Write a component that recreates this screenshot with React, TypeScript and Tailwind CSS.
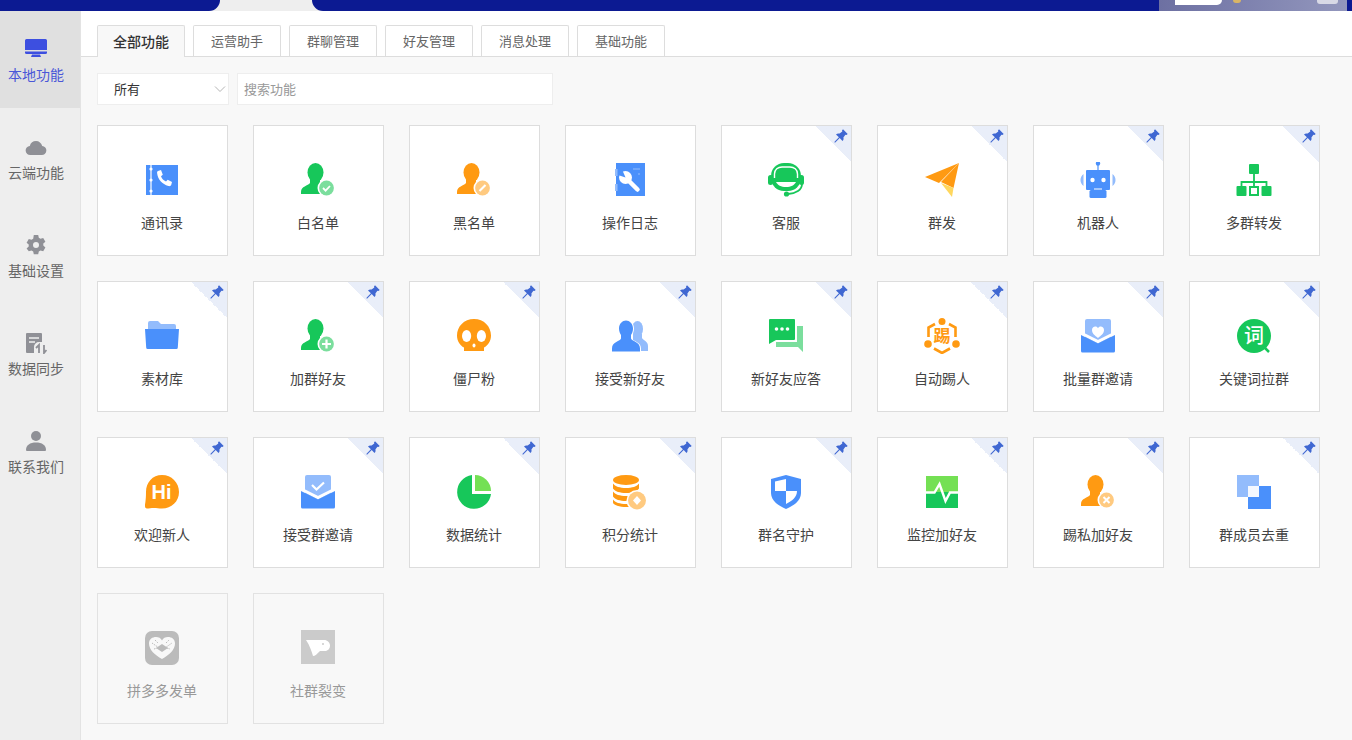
import React from "react";

const B = "#4a90fb", LB = "#93bcfc", G = "#17c75a", LG = "#7bde9d", LM = "#74e054", O = "#ff9a12", LO = "#ffca80";

const person = (c: string) => (
  <>
    <ellipse cx="15.5" cy="10.5" rx="8" ry="9.5" fill={c} />
    <path d="M10 15v6c-2 3-9 3-9 9v2h29v-2c0-6-8-6-10-9v-6z" fill={c} />
  </>
);

const badge = (c: string, inner: React.ReactNode, cx = 26.5, cy = 26) => (
  <>
    <circle cx={cx} cy={cy} r="9" fill="#fff" />
    <circle cx={cx} cy={cy} r="7.4" fill={c} />
    {inner}
  </>
);

const mailBase = (
  <>
    <rect x="5" y="1" width="26" height="26" rx="2" fill={LB} />
  </>
);
const mailFront = (
  <>
    <path d="M1 15l17 8.500L35 15" fill="none" stroke="#fff" strokeWidth="3" />
    <path d="M1 17l17 8.500L35 17v16a1.500 1.500 0 0 1-1.500 1.500h-31A1.500 1.500 0 0 1 1 33z" fill={B} />
  </>
);

const icons: Record<string, React.ReactNode> = {
  book: (
    <>
      <rect x="2" y="3" width="32" height="30" fill={B} />
      <path d="M7 3v30" stroke="#fff" strokeWidth="1.200" />
      <circle cx="7" cy="7" r="1.600" fill="#fff" />
      <circle cx="7" cy="18" r="1.600" fill="#fff" />
      <circle cx="7" cy="29" r="1.600" fill="#fff" />
      <path d="M14 9l3-1 1.800 4.800-1.800 1.400c.9 2.400 2.600 4.200 5 5.300l1.700-1.700 4.300 2.300-.8 3c-.3.900-1.600 1.300-2.800.9-6.200-1.700-10.700-6.800-11.300-13-.1-.9.300-1.800.900-2z" fill="#fff" />
    </>
  ),
  white: (
    <>
      {person(G)}
      {badge(LG, <path d="M23 26l2.600 2.600 4.400-4.600" fill="none" stroke="#fff" strokeWidth="1.800" />)}
    </>
  ),
  black: (
    <>
      {person(O)}
      {badge(LO, <path d="M23.500 29l6-6" fill="none" stroke="#fff" strokeWidth="2.200" />)}
    </>
  ),
  log: (
    <>
      <rect x="4" y="1" width="29" height="33" fill={B} />
      <rect x="3" y="7" width="2.500" height="7" fill={LB} />
      <rect x="3" y="22" width="2.500" height="7" fill={LB} />
      <path d="M21 7h7M26 12h2" stroke={LB} strokeWidth="1.200" />
      <path d="M15 17l10.500 10.500" stroke="#fff" strokeWidth="4.500" strokeLinecap="round" />
      <circle cx="13.500" cy="15.500" r="6.500" fill="#fff" />
      <path d="M13.500 15.500L10 7.500h-4v5.500z" fill={B} />
    </>
  ),
  service: (
    <>
      <rect x="3" y="1" width="30" height="28" rx="13" fill={G} />
      <path d="M6.500 16v-4C6.500 7.500 10 5 14 5h8c4 0 7.500 2.500 7.500 7v4" fill="none" stroke="#fff" strokeWidth="1.400" />
      <path d="M8 20h20c-1.500 3-5 5-10 5s-8.500-2-10-5z" fill="#fff" />
      <rect x="0" y="13" width="5" height="10" rx="2.500" fill={G} />
      <rect x="31" y="13" width="5" height="10" rx="2.500" fill={G} />
      <path d="M34 22c0 6-6 9.500-14 10" fill="none" stroke={G} strokeWidth="1.800" />
      <circle cx="18.500" cy="32" r="2.600" fill={G} />
    </>
  ),
  plane: (
    <>
      <path d="M1 15L35 1 15 21z" fill={O} />
      <path d="M35 1l-5.500 25L17 20z" fill={O} />
      <path d="M17 21l11 14 1.500-9z" fill="#ffd75e" />
    </>
  ),
  robot: (
    <>
      <circle cx="18" cy="1.500" r="2.200" fill={B} />
      <path d="M18 2v6" stroke={B} strokeWidth="1.200" />
      <rect x="6" y="8" width="24" height="20" rx="1" fill={B} />
      <path d="M3.500 12C-.5 15-.5 21 3.500 24zM32.500 12c4 3 4 9 0 12z" fill={LB} />
      <circle cx="12.500" cy="18" r="2.200" fill="#fff" />
      <circle cx="23.500" cy="18" r="2.200" fill="#fff" />
      <path d="M14 27h8" stroke="#fff" strokeWidth="1" />
      <rect x="9.500" y="28" width="17" height="8" rx="1.500" fill={B} />
    </>
  ),
  org: (
    <>
      <rect x="13" y="2" width="10" height="10" rx="1" fill={G} />
      <path d="M18 12v13M5.500 24v-4h25v4" fill="none" stroke={G} strokeWidth="1.800" />
      <rect x="0.500" y="24" width="10" height="10" rx="1" fill={G} />
      <rect x="14" y="25" width="8" height="8" fill="none" stroke={G} strokeWidth="2" />
      <rect x="25.500" y="24" width="10" height="10" rx="1" fill={G} />
    </>
  ),
  folder: (
    <>
      <path d="M4 5a2 2 0 0 1 2-2h8l3 3h13a2 2 0 0 1 2 2v3H4z" fill={LB} />
      <path d="M1 11h34l-1.200 18.500a1.500 1.500 0 0 1-1.500 1.500H3.700a1.500 1.500 0 0 1-1.500-1.500z" fill={B} />
    </>
  ),
  skull: (
    <>
      <path d="M18 1C8 1 1 8.500 1 17.500c0 5.500 3 10 7 12V33h20v-3.500c4-2 7-6.500 7-12C35 8.500 28 1 18 1z" fill={O} />
      <ellipse cx="10.600" cy="18" rx="4.600" ry="6" fill="#fff" />
      <ellipse cx="25.400" cy="18" rx="4.600" ry="6" fill="#fff" />
      <ellipse cx="18" cy="27.500" rx="1.500" ry="2" fill="#fff" />
    </>
  ),
  friends: (
    <>
      <ellipse cx="25.500" cy="11" rx="5.500" ry="8" fill={LB} />
      <path d="M21 16h9v4c1 2.500 6 3 6 8v5H21z" fill={LB} />
      <path d="M14 1.500c4 0 8 3.500 8 9 0 3-1 5-2 6.500v3.500c1.500 3.500 9 3 9 10v3H-.5v-3c0-7 7.500-6.500 9-10V17c-1-1.500-2-3.500-2-6.500 0-5.500 3.500-9 7.500-9z" fill="#fff" />
      <path d="M14 2.500c3.500 0 7 3 7 8 0 3-1 5-2 6.500v3.500c1.500 3.500 9 3 9 10v3H0v-3c0-7 7.500-6.500 9-10V17c-1-1.500-2-3.500-2-6.500 0-5 3.500-8 7-8z" fill={B} />
    </>
  ),
  chat: (
    <>
      <path d="M29 8h6v26l-5-5H8v-5h21z" fill={LG} />
      <path d="M1 2a1 1 0 0 1 1-1h24a1 1 0 0 1 1 1v19a1 1 0 0 1-1 1H8l-7 4z" fill={G} />
      <circle cx="8.500" cy="11" r="1.800" fill="#fff" />
      <circle cx="14" cy="11" r="1.800" fill="#fff" />
      <circle cx="19.500" cy="11" r="1.800" fill="#fff" />
    </>
  ),
  kick: (
    <>
      <circle cx="18" cy="3.500" r="3.500" fill={O} />
      <circle cx="4" cy="26" r="3.800" fill={O} />
      <circle cx="32" cy="26" r="3.800" fill={O} />
      <path d="M11 6L4.500 9.500V19M25 6l6.500 3.500V19M10 30.500L18 35l8-4.500" fill="none" stroke={O} strokeWidth="2.600" />
      <text x="18" y="24" textAnchor="middle" fontSize="17" fontWeight="700" fill={O} fontFamily="'Noto Sans CJK SC', sans-serif">踢</text>
    </>
  ),
  mailHeart: (
    <>
      {mailBase}
      <path d="M18 20c-3-2.500-6-4.500-6-8 0-2 1.500-3.500 3.300-3.500 1.200 0 2.200.7 2.700 1.700.5-1 1.500-1.700 2.700-1.700C22.500 8.500 24 10 24 12c0 3.500-3 5.500-6 8z" fill="#fff" />
      {mailFront}
    </>
  ),
  word: (
    <>
      <path d="M27 28l6 6" stroke={G} strokeWidth="2.500" />
      <circle cx="18" cy="18" r="17" fill={G} />
      <text x="18" y="25" textAnchor="middle" fontSize="20" fontWeight="500" fill="#fff" fontFamily="'Noto Sans CJK SC', sans-serif">词</text>
    </>
  ),
  hi: (
    <>
      <path d="M18 1c9.500 0 17 7.500 17 17s-7.500 16.500-17 16.500c-3 0-5.500-.5-8-.5-3 0-5 .5-7 .5-1.500 0-2-1-2-2.500 0-3 1-5 1-14C2 8.500 8.500 1 18 1z" fill={O} />
      <text x="17.500" y="25" textAnchor="middle" fontSize="20" fontWeight="700" fill="#fff" fontFamily="'Liberation Sans', sans-serif">Hi</text>
    </>
  ),
  mailCheck: (
    <>
      {mailBase}
      <path d="M12 11l4.500 4.500L24 8.500" fill="none" stroke="#fff" strokeWidth="2.200" />
      {mailFront}
    </>
  ),
  pie: (
    <>
      <path d="M16 1A17 17 0 1 0 35 20H16z" fill={G} />
      <path d="M19 1a16 16 0 0 1 16 16H19z" fill={LM} />
    </>
  ),
  coins: (
    <>
      <ellipse cx="14" cy="6" rx="13" ry="5" fill={O} />
      <path d="M1 9.500c2 3 7 4.500 13 4.500s11-1.500 13-4.500v5c-2 3-7 4.500-13 4.500S3 17.500 1 14.500z" fill={O} />
      <path d="M1 17.500c2 3 7 4.500 13 4.500s11-1.500 13-4.500v5c-2 3-7 4.500-13 4.500S3 25.500 1 22.500z" fill={O} />
      <path d="M1 25.500c2 3 7 4.500 13 4.500h3v3h-3C8 33 1 31 1 28.500z" fill={O} />
      <circle cx="25" cy="26.500" r="10.500" fill="#fff" />
      <circle cx="25" cy="26.500" r="9" fill={LO} />
      <path d="M25 22l4 4.500-4 4.500-4-4.500z" fill="#fff" />
    </>
  ),
  shield: (
    <>
      <path d="M18 1l15 4v14c0 8-8 13-15 16C11 32 3 27 3 19V5z" fill={B} />
      <path d="M18 5v12H7V7.500zM18 17h11c0 6-5 10-11 13z" fill="#fff" />
    </>
  ),
  monitor: (
    <>
      <rect x="2" y="2" width="32" height="18" fill={LM} />
      <rect x="2" y="18" width="32" height="16" fill={G} />
      <path d="M2 18.500h8.500l5-8.500 6 17 4.500-8.500h8" fill="none" stroke="#fff" strokeWidth="2.400" />
    </>
  ),
  dup: (
    <>
      <rect x="1" y="1" width="22" height="22" fill={LB} />
      <rect x="12" y="12" width="23" height="23" fill={B} />
      <rect x="12" y="12" width="11" height="11" fill="#f4f8ff" />
    </>
  ),
  kickAdd: (
    <>
      {person(O)}
      {badge(LO, <path d="M23.500 23l6 6M29.500 23l-6 6" fill="none" stroke="#fff" strokeWidth="2" />)}
    </>
  ),
  add: (
    <>
      {person(G)}
      {badge(LG, <path d="M26.500 21.500v9M22 26h9" fill="none" stroke="#fff" strokeWidth="2.200" />)}
    </>
  ),
  pdd: (
    <>
      <rect x="1" y="1" width="34" height="34" rx="7" fill="#bbb" />
      <path d="M18 29C11 25 5 20 5 13.500 5 9 8.500 7 12 7c2.500 0 5 1 6 3.500C19 8 21.500 7 24 7c3.500 0 7 2 7 6.500C31 20 25 25 18 29z" fill="#fff" opacity=".9" />
      <path d="M8 13l10 7 10-7M11 10l3 3M22 13l3-3M10 19l3-1M23 18l3 1" fill="none" stroke="#bbb" strokeWidth="1" strokeDasharray="1.500 1" />
      <path d="M12 18l6-4 6 4-6 4z" fill="#bbb" />
    </>
  ),
  dog: (
    <>
      <rect x="1" y="0" width="34" height="34" fill="#cbcbcb" />
      <path d="M6 10h18c3.500 0 6 2.500 6 5.500S28 21 25 21h-5c-3 3-5 5-7 5-1.500-5-3-10-7-16z" fill="#fff" />
      <circle cx="23" cy="14" r="1" fill="#cbcbcb" />
    </>
  ),
};

const Pin = () => (
  <svg viewBox="0 0 14 14" className="absolute top-[3px] right-[3px] h-[14px] w-[14px]">
    <path d="M9 .3L13.700 5l-1.300 1-1-.3-2 2.700c.4 1.400.1 2.500-.9 3.500L5.700 9.100 1 13.700.3 13 4.900 8.300 2 5.500c1-1 2.200-1.300 3.600-.9l2.700-2-.3-1z" fill="#3f67d2" />
  </svg>
);

type Item = { n: string; i: string; p?: boolean; off?: boolean };
const items: Item[] = [
  { n: "通讯录", i: "book" },
  { n: "白名单", i: "white" },
  { n: "黑名单", i: "black" },
  { n: "操作日志", i: "log" },
  { n: "客服", i: "service", p: true },
  { n: "群发", i: "plane", p: true },
  { n: "机器人", i: "robot", p: true },
  { n: "多群转发", i: "org", p: true },
  { n: "素材库", i: "folder", p: true },
  { n: "加群好友", i: "add", p: true },
  { n: "僵尸粉", i: "skull", p: true },
  { n: "接受新好友", i: "friends", p: true },
  { n: "新好友应答", i: "chat", p: true },
  { n: "自动踢人", i: "kick", p: true },
  { n: "批量群邀请", i: "mailHeart", p: true },
  { n: "关键词拉群", i: "word", p: true },
  { n: "欢迎新人", i: "hi", p: true },
  { n: "接受群邀请", i: "mailCheck", p: true },
  { n: "数据统计", i: "pie", p: true },
  { n: "积分统计", i: "coins", p: true },
  { n: "群名守护", i: "shield", p: true },
  { n: "监控加好友", i: "monitor", p: true },
  { n: "踢私加好友", i: "kickAdd", p: true },
  { n: "群成员去重", i: "dup", p: true },
  { n: "拼多多发单", i: "pdd", off: true },
  { n: "社群裂变", i: "dog", off: true },
];

const tabs = ["运营助手", "群聊管理", "好友管理", "消息处理", "基础功能"];

const side = [
  {
    n: "本地功能",
    on: true,
    d: (
      <>
        <path d="M0 2.500A1.500 1.500 0 0 1 1.500 1h19A1.500 1.500 0 0 1 22 2.500V12H0z" fill="currentColor" />
        <path d="M0 13.500h22v1a1.500 1.500 0 0 1-1.500 1.500h-19A1.500 1.500 0 0 1 0 14.500z" fill="currentColor" />
        <path d="M7 16.500h8l1 2.500H6z" fill="currentColor" />
      </>
    ),
  },
  {
    n: "云端功能",
    d: <path d="M5.500 19A4.500 4.500 0 0 1 4.800 10C5.500 6.800 8 5 11 5c3 0 5.500 2 6.200 5a4.500 4.500 0 0 1-.7 9z" fill="currentColor" />,
  },
  {
    n: "基础设置",
    d: (
      <path
        fillRule="evenodd"
        d="M8.800 1h4.400l.6 2.800 1.700 1 2.700-.9 2.200 3.800-2.100 1.900v2l2.100 1.900-2.200 3.800-2.700-.9-1.700 1-.6 2.800H8.800l-.6-2.800-1.700-1-2.700.9L1.600 14.500l2.100-1.900v-2L1.600 8.700l2.200-3.800 2.700.9 1.700-1zM11 8a3 3 0 1 0 0 6 3 3 0 0 0 0-6z"
        fill="currentColor"
      />
    ),
  },
  {
    n: "数据同步",
    d: (
      <>
        <path d="M1 2a1 1 0 0 1 1-1h14a1 1 0 0 1 1 1v8h-3a5 5 0 0 0-5 5v6H2a1 1 0 0 1-1-1z" fill="currentColor" />
        <path d="M4 6h10M4 10h6" stroke="#eee" strokeWidth="1.500" />
        <path d="M14 21v-8l-3 3M19 13v8l2.500-3" fill="none" stroke="currentColor" strokeWidth="1.800" />
      </>
    ),
  },
  {
    n: "联系我们",
    d: (
      <>
        <circle cx="11" cy="6" r="5" fill="currentColor" />
        <path d="M1 20c0-5 4-7.500 10-7.500S21 15 21 20a1 1 0 0 1-1 1H2a1 1 0 0 1-1-1z" fill="currentColor" />
      </>
    ),
  },
];

export default function App() {
  return (
    <div className="flex h-[740px] w-[1352px] flex-col overflow-hidden bg-[#f8f8f8] font-['Noto_Sans_CJK_SC','Liberation_Sans',sans-serif]">
      <div className="flex h-[11px] shrink-0 bg-[#eeeeee]">
        <div className="w-[220px] rounded-br-[12px] bg-[#0c1a92]" />
        <div className="w-[92px]" />
        <div className="flex flex-1 justify-end rounded-bl-[12px] bg-[#0c1a92] pr-[5px]">
          <div className="relative w-[188px] bg-gradient-to-r from-[#6d70a2] to-[#9397bd]">
            <div className="absolute top-0 left-[16px] h-[5px] w-[47px] rounded-br-[5px] bg-white" />
            <div className="absolute top-0 left-[74px] h-[3px] w-[8px] rounded-b-full bg-[#d9b566]" />
            <div className="absolute top-0 left-[158px] h-[4px] w-[21px] rounded-b-[3px] bg-[#d8d9e6]" />
          </div>
        </div>
      </div>
      <div className="flex min-h-0 flex-1">
        <aside className="w-[81px] shrink-0 border-r border-[#e3e3e3] bg-[#eeeeee]">
          {side.map((s) => (
            <div
              key={s.n}
              className={
                s.on
                  ? "flex h-[97px] flex-col items-center bg-[#e0e0e0] pt-[27px] pr-[8px] text-[#4a57d8]"
                  : "flex h-[98px] flex-col items-center pt-[28px] pr-[8px] text-[#666666]"
              }
            >
              <svg viewBox="0 0 22 22" className={s.on ? "h-[22px] w-[22px] text-[#3d4fe0]" : "h-[22px] w-[22px] text-[#8f9096]"}>
                {s.d}
              </svg>
              <span className="mt-[4px] text-[14px] leading-[20px] whitespace-nowrap">{s.n}</span>
            </div>
          ))}
        </aside>
        <main className="min-w-0 flex-1">
          <div className="flex h-[46px] items-end gap-[8px] border-b border-[#dddddd] bg-white pl-[16px]">
            <div className="-mb-px flex h-[32px] w-[88px] items-center justify-center rounded-t-[2px] border border-b-0 border-[#dddddd] bg-[#f8f8f8] text-[14px] font-medium text-[#333333]">
              全部功能
            </div>
            {tabs.map((t) => (
              <div
                key={t}
                className="flex h-[31px] w-[88px] items-center justify-center self-end rounded-t-[2px] border border-b-0 border-[#dddddd] bg-white text-[13px] text-[#666666]"
              >
                {t}
              </div>
            ))}
          </div>
          <div className="px-[16px] pt-[16px]">
            <div className="flex gap-[8px]">
              <div className="flex h-[32px] w-[132px] items-center justify-between border border-[#eeeeee] bg-white pr-[2px] pl-[16px] text-[13px] text-[#333333]">
                <span>所有</span>
                <svg viewBox="0 0 12 12" className="h-[12px] w-[12px]">
                  <path d="M1 3.500L6 8.500l5-5" fill="none" stroke="#b5b5b5" strokeWidth="1" />
                </svg>
              </div>
              <div className="flex h-[32px] w-[316px] items-center border border-[#eeeeee] bg-white pl-[6px] text-[13px] text-[#999999]">
                搜索功能
              </div>
            </div>
            <div className="mt-[20px] grid grid-cols-[repeat(8,131px)] gap-[25px]">
              {items.map((it) => (
                <div
                  key={it.n}
                  className={
                    it.off
                      ? "relative flex h-[131px] flex-col items-center border border-[#e2e2e2] pt-[36px] pr-[1px]"
                      : "relative flex h-[131px] flex-col items-center border border-[#dddddd] bg-white pt-[36px] pr-[1px]"
                  }
                >
                  {it.p && (
                    <>
                      <div className="absolute top-0 right-0 h-[36px] w-[36px] bg-gradient-to-tr from-transparent from-50% to-[#e9eef9] to-50%" />
                      <Pin />
                    </>
                  )}
                  <svg viewBox="0 0 36 36" className="h-[36px] w-[36px]">
                    {icons[it.i]}
                  </svg>
                  <span
                    className={
                      it.off
                        ? "mt-[14px] text-[14px] leading-[20px] whitespace-nowrap text-[#999999]"
                        : "mt-[14px] text-[14px] leading-[20px] whitespace-nowrap text-[#444444]"
                    }
                  >
                    {it.n}
                  </span>
                </div>
              ))}
            </div>
          </div>
        </main>
      </div>
    </div>
  );
}
